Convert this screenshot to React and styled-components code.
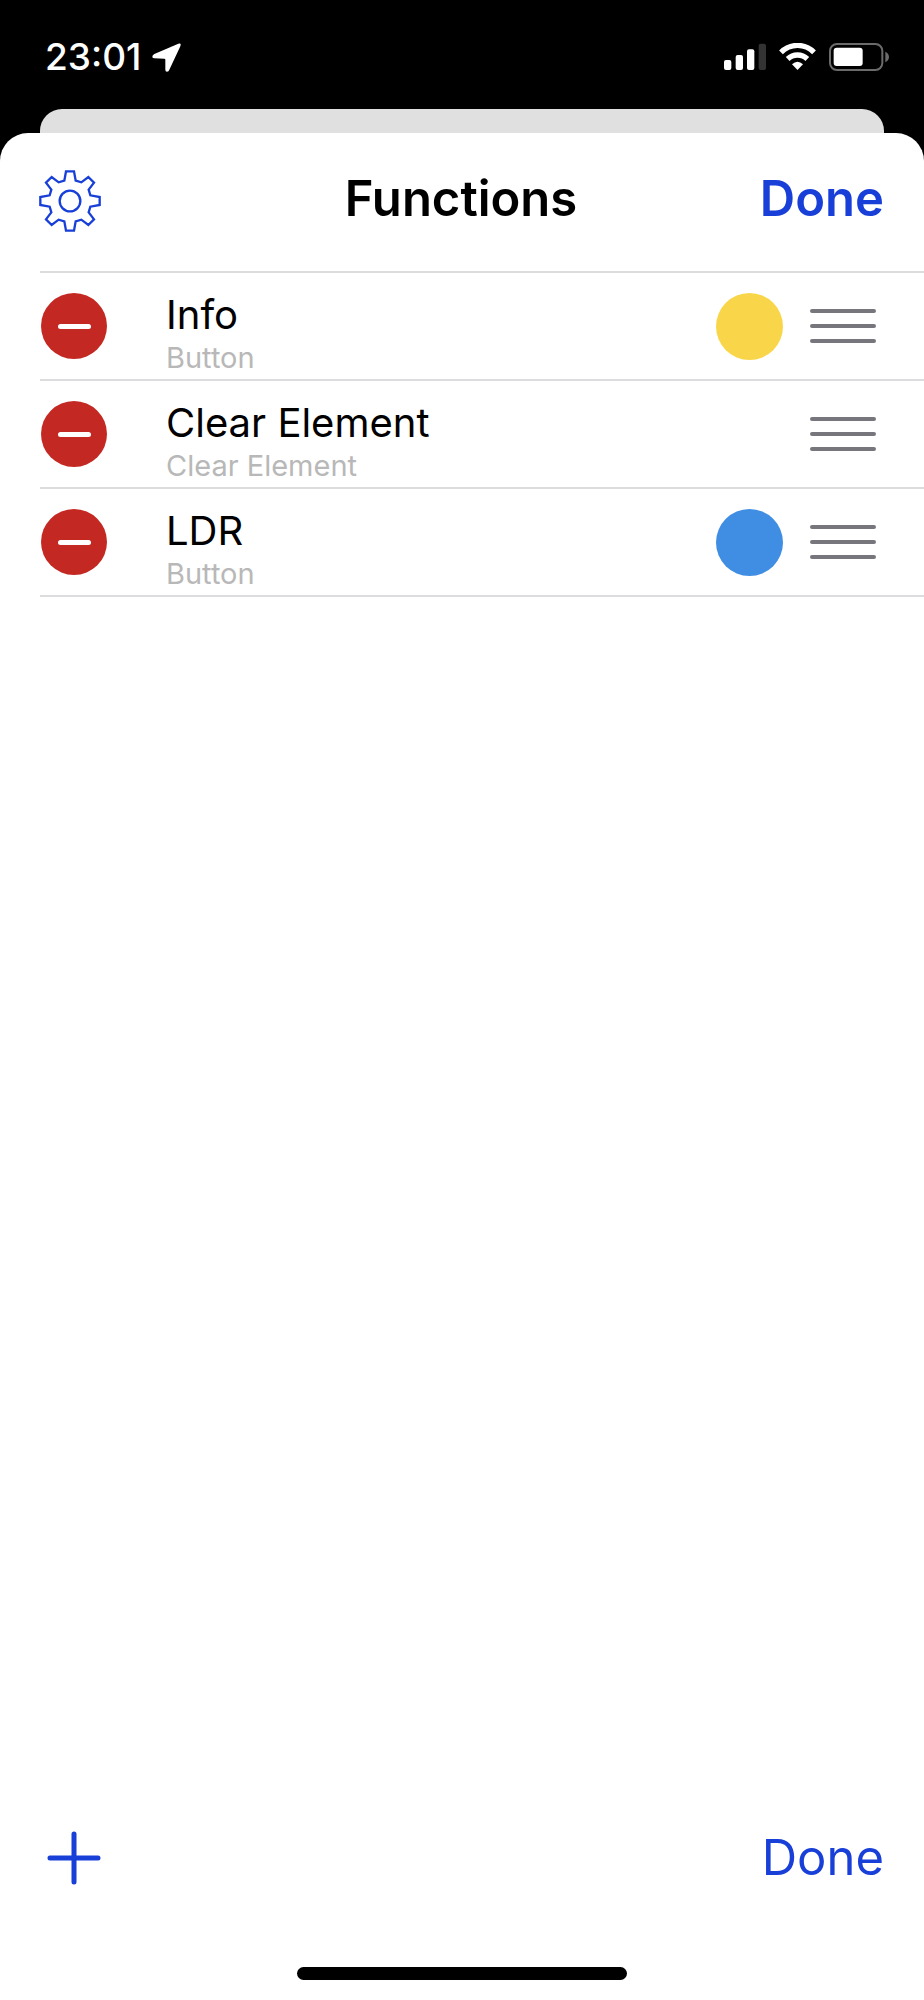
import React, { useState } from "react";
import styled, { createGlobalStyle } from "styled-components";

const GlobalStyle = createGlobalStyle`
    *{
        box-sizing: border-box;
    }

    body{
        margin: 0;
        background-color: #000000;
        font-family: Inter, "Liberation Sans", sans-serif;
    }

    button{
        background: none;
        border: none;
        padding: 0;
        font-family: inherit;
        cursor: pointer;
    }

    svg{
        display: block;
    }
`

const Screen = styled.div`
    display: flex;
    flex-direction: column;
    min-height: 100vh;
`

const StatusBar = styled.div`
    display: flex;
    justify-content: space-between;
    align-items: center;
    height: 109px;
    padding: 5px 35px 0 45px;
    color: white;
`

const StatusGroup = styled.div`
    display: flex;
    align-items: center;
    gap: ${props => props.$gap};
`

const Time = styled.time`
    font-size: 37px;
    font-weight: 500;
    line-height: 44px;
`

const BackCard = styled.div`
    height: 24px;
    margin: 0 40px;
    border-radius: 22px 22px 0 0;
    background-color: #e0e0e0;
`

const Sheet = styled.main`
    display: flex;
    flex-direction: column;
    flex: 1;
    border-radius: 28px 28px 0 0;
    background-color: white;
`

const Header = styled.header`
    display: grid;
    grid-template-columns: 1fr auto 1fr;
    align-items: start;
    height: 138px;
    padding: 36px 40px 0 38px;
`

const Title = styled.h1`
    margin: 0;
    font-size: 49px;
    font-weight: 600;
    line-height: 60px;
`

const IconButton = styled.button`
    justify-self: start;
    color: #183fd8;
`

const DoneButton = styled.button`
    justify-self: end;
    color: #183fd8;
    font-size: 49px;
    font-weight: ${props => props.$strong ? 600 : 400};
    line-height: 60px;
`

const List = styled.ul`
    list-style: none;
    margin: 0 0 0 40px;
    padding: 0;
    border-top: solid 2px #dcdcde;
`

const Row = styled.li`
    display: flex;
    align-items: center;
    height: 108px;
    padding: 0 48px 0 1px;
    border-bottom: solid 2px #dcdcde;
`

const RemoveButton = styled.button`
    display: flex;
    justify-content: center;
    align-items: center;
    flex: none;
    width: 66px;
    height: 66px;
    border-radius: 50%;
    background-color: #c42823;
`

const MinusBar = styled.span`
    width: 33px;
    height: 5px;
    border-radius: 3px;
    background-color: white;
`

const RowText = styled.div`
    flex: 1;
    padding-top: 15px;
    margin-left: 59px;
`

const RowName = styled.div`
    font-size: 40px;
    line-height: 48px;
`

const RowType = styled.div`
    color: #b8b8b8;
    font-size: 29px;
    line-height: 38px;
`

const ColorDot = styled.span`
    width: 67px;
    height: 67px;
    margin-right: 27px;
    border-radius: 50%;
    background-color: ${props => props.$color};
`

const DragHandle = styled.button`
    display: flex;
    flex-direction: column;
    gap: 11px;
    width: 66px;
    cursor: grab;

    & > span{
        height: 4px;
        border-radius: 2px;
        background-color: #77767c;
    }
`

const Toolbar = styled.footer`
    display: flex;
    justify-content: space-between;
    align-items: center;
    margin-top: auto;
    padding: 0 40px 79px 47px;
`

const HomeIndicator = styled.div`
    align-self: center;
    width: 330px;
    height: 13px;
    margin-bottom: 20px;
    border-radius: 7px;
    background-color: black;
`

// one axis tooth and one diagonal tooth, repeated every quarter turn
const GEAR_QUARTER = [[-12, -89], [12, -89], [17, -61], [34, -56], [55, -72], [72, -55], [56, -34], [61, -17]]

const gearPoints = [0, 1, 2, 3].flatMap(turn =>
    GEAR_QUARTER.map(([x, y]) => {
        for (let i = 0; i < turn; i++) [x, y] = [-y, x]
        return `${x},${y}`
    })
).join(" ")

const GearIcon = () => (
    <svg width="64" height="64" viewBox="-96 -96 192 192" fill="none" stroke="currentColor" strokeWidth="7">
        <polygon points={gearPoints} />
        <circle r="31" />
    </svg>
)

const PlusIcon = () => (
    <svg width="54" height="54" viewBox="0 0 54 54" stroke="currentColor" strokeWidth="5" strokeLinecap="round">
        <path d="M27 3V51M3 27H51" />
    </svg>
)

const LocationIcon = () => (
    <svg width="29" height="29" viewBox="0 0 87 87" fill="currentColor">
        <path d="M79 2Q89 -1 85 10L52 80Q50 86 45 86Q40 86 40 80V50Q40 47 37 47L7 46Q1 46 1 41Q1 36 7 33Z" />
    </svg>
)

const SignalIcon = () => (
    <svg width="42" height="28" viewBox="0 0 126 84" fill="currentColor">
        <rect x="0" y="51" width="22" height="30" rx="6" />
        <rect x="35" y="36" width="22" height="45" rx="6" />
        <rect x="69" y="19" width="22" height="62" rx="6" />
        <rect x="104" y="2" width="22" height="79" rx="6" fill="#333333" />
    </svg>
)

const WifiIcon = () => (
    <svg width="37" height="28" viewBox="0 0 111 84" fill="none" stroke="currentColor" strokeWidth="16">
        <path d="M6 28A70 70 0 0 1 105 28" />
        <path d="M26 48A42 42 0 0 1 85 48" />
        <path d="M55.500 81L39 64Q55.500 49 72 64Z" fill="currentColor" stroke="none" />
    </svg>
)

const BatteryIcon = () => (
    <svg width="60" height="28" viewBox="0 0 180 84">
        <rect x="3" y="3" width="157" height="78" rx="21" fill="none" stroke="#6b6b6b" strokeWidth="6" />
        <rect x="14" y="14" width="87" height="55" rx="9" fill="white" />
        <path d="M169 26Q180 32 180 42Q180 52 169 58Z" fill="#6b6b6b" />
    </svg>
)

const initialFunctions = [
    { id: 1, name: "Info", type: "Button", color: "#f9d649" },
    { id: 2, name: "Clear Element", type: "Clear Element" },
    { id: 3, name: "LDR", type: "Button", color: "#408ee3" },
]

const App = () => {
    const [functions, setFunctions] = useState(initialFunctions)

    const removeFunction = (id) => {
        setFunctions(functions.filter(item => item.id !== id))
    }

    return (
        <Screen>
            <GlobalStyle />
            <StatusBar>
                <StatusGroup $gap="11px">
                    <Time>23:01</Time>
                    <LocationIcon />
                </StatusGroup>
                <StatusGroup $gap="13px">
                    <SignalIcon />
                    <WifiIcon />
                    <BatteryIcon />
                </StatusGroup>
            </StatusBar>
            <BackCard />
            <Sheet>
                <Header>
                    <IconButton aria-label="Settings"><GearIcon /></IconButton>
                    <Title>Functions</Title>
                    <DoneButton $strong>Done</DoneButton>
                </Header>
                <List>
                    {functions.map(item => (
                        <Row key={item.id}>
                            <RemoveButton aria-label={`Remove ${item.name}`} onClick={() => removeFunction(item.id)}>
                                <MinusBar />
                            </RemoveButton>
                            <RowText>
                                <RowName>{item.name}</RowName>
                                <RowType>{item.type}</RowType>
                            </RowText>
                            {item.color && <ColorDot $color={item.color} />}
                            <DragHandle aria-label={`Reorder ${item.name}`}>
                                <span /><span /><span />
                            </DragHandle>
                        </Row>
                    ))}
                </List>
                <Toolbar>
                    <IconButton aria-label="Add function"><PlusIcon /></IconButton>
                    <DoneButton>Done</DoneButton>
                </Toolbar>
                <HomeIndicator />
            </Sheet>
        </Screen>
    )
}

export default App
